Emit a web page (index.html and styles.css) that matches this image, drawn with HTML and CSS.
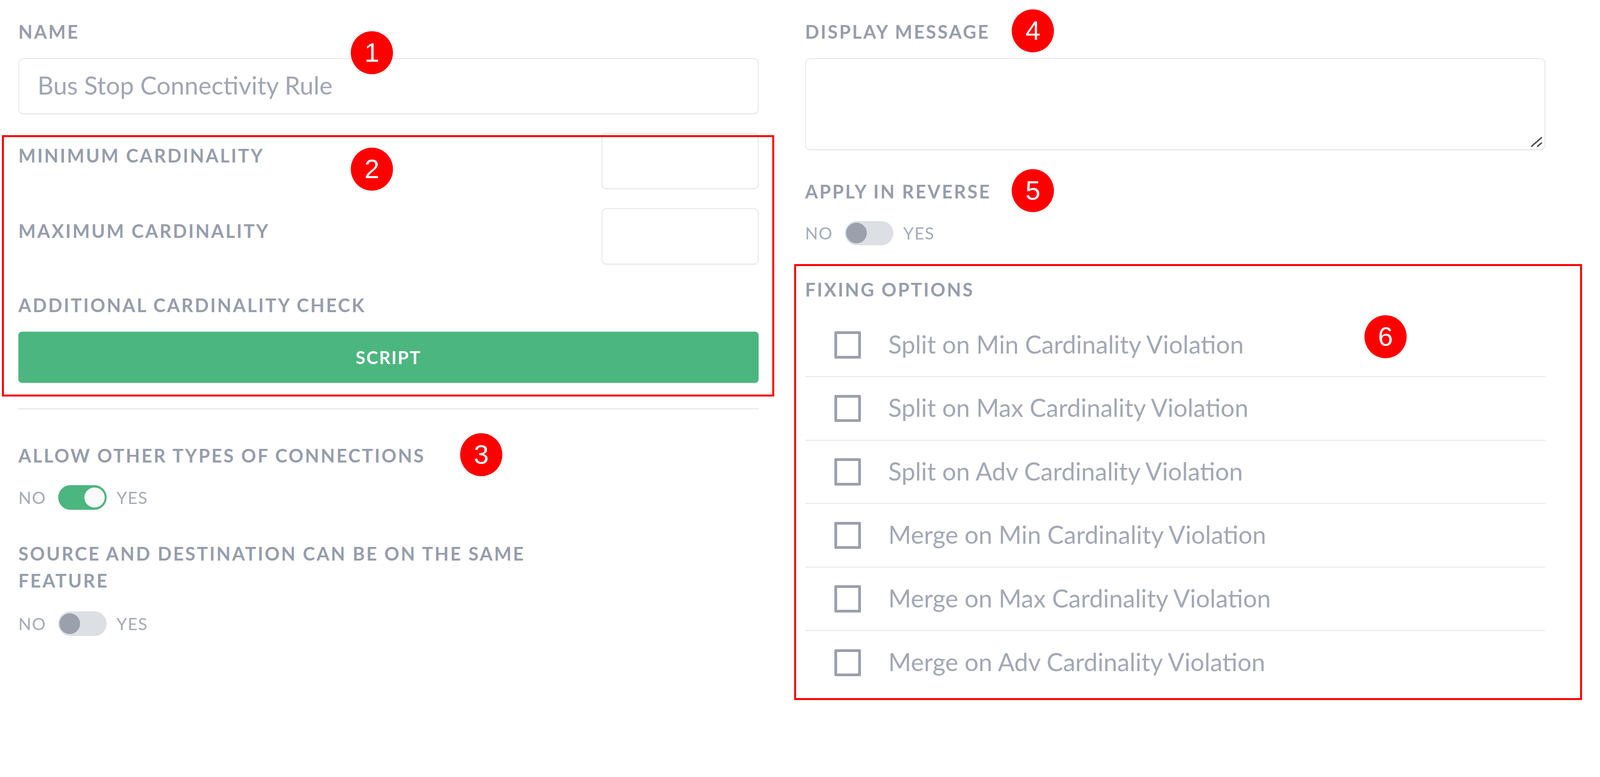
FILE: index.html
```html
<!DOCTYPE html>
<html lang="en">
<head>
<meta charset="utf-8">
<title>Connectivity Rule</title>
<link rel="stylesheet" href="styles.css">
</head>
<body>
<div class="page">
  <div class="form">
    <div class="col">
      <div class="lbl">NAME</div>
      <input class="field name-field" type="text" value="Bus Stop Connectivity Rule">

      <div class="card-section">
        <div class="card-row">
          <div class="lbl row-lbl">MINIMUM CARDINALITY</div>
          <input class="field num-field" type="text">
        </div>
        <div class="card-row card-row-2">
          <div class="lbl row-lbl">MAXIMUM CARDINALITY</div>
          <input class="field num-field" type="text">
        </div>
        <div class="lbl add-lbl">ADDITIONAL CARDINALITY CHECK</div>
        <button class="btn-script" type="button">SCRIPT</button>
      </div>

      <div class="divider"></div>

      <div class="lbl allow-lbl">ALLOW OTHER TYPES OF CONNECTIONS</div>
      <div class="toggle-row">
        <span class="tg-text">NO</span>
        <span class="switch on"><span class="knob"></span></span>
        <span class="tg-text">YES</span>
      </div>

      <div class="lbl source-lbl">SOURCE AND DESTINATION CAN BE ON THE SAME FEATURE</div>
      <div class="toggle-row toggle-row-2">
        <span class="tg-text">NO</span>
        <span class="switch"><span class="knob"></span></span>
        <span class="tg-text">YES</span>
      </div>
    </div>

    <div class="col">
      <div class="lbl">DISPLAY MESSAGE</div>
      <div class="ta-wrap">
        <textarea class="field msg-field"></textarea>
        <svg class="grip" width="31" height="27" viewBox="0 0 34 30">
          <line x1="3" y1="27" x2="31" y2="3"/>
          <line x1="20" y1="27" x2="31" y2="18"/>
        </svg>
      </div>

      <div class="lbl reverse-lbl">APPLY IN REVERSE</div>
      <div class="toggle-row">
        <span class="tg-text">NO</span>
        <span class="switch"><span class="knob"></span></span>
        <span class="tg-text">YES</span>
      </div>

      <div class="lbl fixing-lbl">FIXING OPTIONS</div>
      <ul class="options">
        <li class="opt"><span class="cbox"></span><span class="opt-text">Split on Min Cardinality Violation</span></li>
        <li class="opt"><span class="cbox"></span><span class="opt-text">Split on Max Cardinality Violation</span></li>
        <li class="opt"><span class="cbox"></span><span class="opt-text">Split on Adv Cardinality Violation</span></li>
        <li class="opt"><span class="cbox"></span><span class="opt-text">Merge on Min Cardinality Violation</span></li>
        <li class="opt"><span class="cbox"></span><span class="opt-text">Merge on Max Cardinality Violation</span></li>
        <li class="opt"><span class="cbox"></span><span class="opt-text">Merge on Adv Cardinality Violation</span></li>
      </ul>
    </div>
  </div>

  <div class="anno-box box-2"></div>
  <div class="anno-box box-6"></div>
  <div class="badge b1">1</div>
  <div class="badge b2">2</div>
  <div class="badge b3">3</div>
  <div class="badge b4">4</div>
  <div class="badge b5">5</div>
  <div class="badge b6">6</div>
</div>
</body>
</html>
```

FILE: styles.css
```css
* { box-sizing: border-box; }

html, body {
  margin: 0;
  padding: 0;
  background: #ffffff;
}

body {
  font-family: "Lato", "Noto Sans", sans-serif;
}

.page {
  position: relative;
  min-height: 100vh;
}

.form {
  display: grid;
  grid-template-columns: 1895px 1895px;
  column-gap: 119px;
  padding: 47px 0 0 47px;
}

.col {
  display: flex;
  flex-direction: column;
  align-items: stretch;
}

.lbl {
  font-size: 47px;
  line-height: 68.5px;
  font-weight: 700;
  letter-spacing: 4px;
  color: #979dab;
  text-transform: uppercase;
}

.field {
  display: block;
  font-family: "Lato", "Noto Sans", sans-serif;
  border: 2.7px solid #e5e6e9;
  border-radius: 12.6px;
  background: #fff;
  box-shadow: 0 2px 3px rgba(0, 0, 0, 0.04);
  outline: none;
}

.name-field {
  margin-top: 33.4px;
  height: 143.5px;
  width: 100%;
  padding: 0 0 7px 47px;
  font-size: 63.5px;
  color: #a1a6b3;
}

.card-section {
  margin-top: 47.8px;
  display: flex;
  flex-direction: column;
}

.card-row {
  display: flex;
  justify-content: space-between;
  align-items: flex-start;
  height: 143.5px;
}

.card-row-2 { margin-top: 49.6px; }

.row-lbl { margin-top: 23.5px; }

.num-field {
  width: 402.5px;
  height: 143.5px;
  padding: 0 27px;
  font-size: 54px;
}

.add-lbl { margin-top: 70.4px; }

.btn-script {
  margin-top: 33.4px;
  height: 130.9px;
  width: 100%;
  border: none;
  border-radius: 9px;
  background: #4cb680;
  color: #ffffff;
  font-family: "Lato", "Noto Sans", sans-serif;
  font-size: 45px;
  font-weight: 700;
  letter-spacing: 2.7px;
  box-shadow: 0 2px 3px rgba(0, 0, 0, 0.08);
}

.divider {
  margin-top: 65px;
  height: 2.7px;
  background: #e5e8ec;
}

.allow-lbl { margin-top: 84.8px; }

.toggle-row {
  display: flex;
  align-items: center;
  margin-top: 41.5px;
  height: 62.3px;
}

.toggle-row-2 { margin-top: 45px; }

.tg-text {
  font-size: 43px;
  letter-spacing: 1.8px;
  color: #a6abb6;
  line-height: 1;
}

.switch {
  position: relative;
  display: inline-block;
  width: 124.5px;
  height: 62.3px;
  border-radius: 31.2px;
  background: #dcdfe4;
  margin: 0 25.3px 0 30.7px;
}

.switch .knob {
  position: absolute;
  top: 4.5px;
  left: 3.6px;
  width: 53.2px;
  height: 53.2px;
  border-radius: 50%;
  background: #9aa0ac;
}

.switch.on { background: #4cb680; }

.switch.on .knob {
  left: auto;
  right: 5.4px;
  top: 5.4px;
  width: 51.5px;
  height: 51.5px;
  background: #fafafa;
}

.source-lbl {
  margin-top: 78.5px;
  max-width: 1444px;
}

/* right column */
.ta-wrap {
  position: relative;
  margin-top: 33.4px;
}

.msg-field {
  width: 100%;
  height: 235.5px;
  resize: none;
}

.grip {
  position: absolute;
  right: 7px;
  bottom: 7px;
}

.grip line {
  stroke: #4a4a4a;
  stroke-width: 4;
  stroke-linecap: round;
}

.reverse-lbl { margin-top: 71.3px; }

.fixing-lbl { margin-top: 79.4px; }

.options {
  list-style: none;
  margin: 27px 0 0 0;
  padding: 0;
}

.opt {
  display: flex;
  align-items: center;
  height: 162.5px;
  border-bottom: 2.7px solid #e3e6ea;
  padding-left: 75px;
}

.opt:last-child { border-bottom: none; }

.cbox {
  width: 67.7px;
  height: 69.5px;
  border: 7.2px solid #9aa0ac;
  border-radius: 3px;
  flex: none;
}

.opt-text {
  margin-left: 70.4px;
  font-size: 63.2px;
  color: #a3a8b4;
  padding-bottom: 5.4px;
}

/* annotations */
.anno-box {
  position: absolute;
  border: 5.4px solid #ff0000;
  pointer-events: none;
}

.box-2 {
  left: 5.4px;
  top: 345.7px;
  width: 1976.5px;
  height: 669.7px;
}

.box-6 {
  left: 2032.5px;
  top: 676px;
  width: 2017px;
  height: 1115.5px;
}

.badge {
  position: absolute;
  width: 108.3px;
  height: 110.1px;
  margin: -55px 0 0 -54.2px;
  border-radius: 50%;
  background: #ff0000;
  color: #ffffff;
  font-family: "Liberation Sans", Arial, sans-serif;
  font-size: 68.6px;
  line-height: 110.1px;
  text-align: center;
}

.b1 { left: 952.1px; top: 134.5px; }
.b2 { left: 952.1px; top: 433.2px; }
.b3 { left: 1232px; top: 1164.2px; }
.b4 { left: 2644.3px; top: 79.4px; }
.b5 { left: 2644.3px; top: 488.3px; }
.b6 { left: 3546.8px; top: 861.9px; }
```
